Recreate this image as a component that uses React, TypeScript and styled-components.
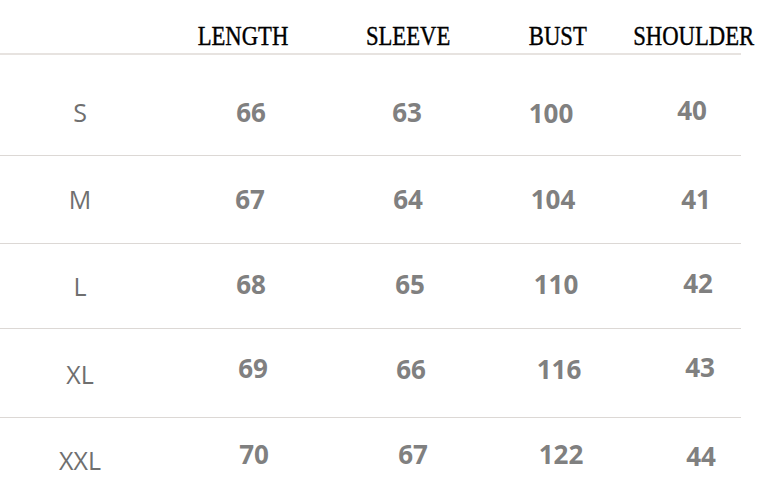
import React from "react";
import styled, { createGlobalStyle } from "styled-components";

const Global = createGlobalStyle`
  html, body { margin: 0; padding: 0; background: #ffffff; }
  body { width: 761px; height: 495px; overflow: hidden; }
`;

const Page = styled.div`
  width: 761px;
  height: 495px;
  background: #ffffff;
  overflow: hidden;
`;

const HeaderRow = styled.div`
  width: 741px;
  height: 50px;
  padding-bottom: 3px;
  border-bottom: 2px solid #e7e3e0;
  display: grid;
  grid-template-columns: 160px 166px 164px 136px 136px;
  align-items: end;
`;

const HeadCell = styled.div`
  display: flex;
  justify-content: center;
`;

const HeadText = styled.span`
  display: inline-block;
  font-family: "Liberation Serif", "Times New Roman", serif;
  font-size: 28px;
  line-height: 1;
  color: #000000;
  white-space: nowrap;
  transform: scaleX(0.81);
  -webkit-text-stroke: 0.4px #000;
`;

const Row = styled.div<{ $h: number; $last?: boolean }>`
  width: 741px;
  height: ${(p) => p.$h}px;
  border-bottom: ${(p) => (p.$last ? "none" : "1px solid #dcd8d5")};
  display: grid;
  grid-template-columns: 160px 182px 132px 158px 124px;
  align-items: center;
`;

const SizeCell = styled.div<{ $dy: number }>`
  text-align: center;
  font-family: "Open Sans", "Noto Sans", sans-serif;
  font-size: 25px;
  font-weight: 400;
  line-height: 1;
  color: #6f6f6f;
  transform: translateY(${(p) => p.$dy}px);
`;

const NumCell = styled.div<{ $dx: number; $dy: number }>`
  text-align: center;
  font-family: "Open Sans", "Noto Sans", sans-serif;
  font-size: 26px;
  font-weight: 700;
  line-height: 1;
  color: #808080;
  transform: translate(${(p) => p.$dx}px, ${(p) => p.$dy}px);
`;

type RowData = {
  size: string;
  h: number;
  labelDy: number;
  values: { v: string; dx: number; dy: number }[];
};

const rows: RowData[] = [
  {
    size: "S",
    h: 100,
    labelDy: 7,
    values: [
      { v: "66", dx: 0, dy: 7 },
      { v: "63", dx: -1, dy: 7 },
      { v: "100", dx: -2, dy: 8 },
      { v: "40", dx: -2, dy: 5 },
    ],
  },
  {
    size: "M",
    h: 87,
    labelDy: 0,
    values: [
      { v: "67", dx: -1, dy: -1 },
      { v: "64", dx: 0, dy: -1 },
      { v: "104", dx: 0, dy: -1 },
      { v: "41", dx: 2, dy: -1 },
    ],
  },
  {
    size: "L",
    h: 84,
    labelDy: 0,
    values: [
      { v: "68", dx: 0, dy: -2 },
      { v: "65", dx: 2, dy: -2 },
      { v: "110", dx: 3, dy: -2 },
      { v: "42", dx: 4, dy: -3 },
    ],
  },
  {
    size: "XL",
    h: 88,
    labelDy: 1,
    values: [
      { v: "69", dx: 2, dy: -5 },
      { v: "66", dx: 3, dy: -4 },
      { v: "116", dx: 6, dy: -4 },
      { v: "43", dx: 6, dy: -6 },
    ],
  },
  {
    size: "XXL",
    h: 77,
    labelDy: 4,
    values: [
      { v: "70", dx: 3, dy: -3 },
      { v: "67", dx: 5, dy: -3 },
      { v: "122", dx: 8, dy: -3 },
      { v: "44", dx: 7, dy: -1 },
    ],
  },
];

const headers = ["LENGTH", "SLEEVE", "BUST", "SHOULDER"];

export default function App() {
  return (
    <Page>
      <Global />
      <HeaderRow>
        <div />
        {headers.map((h) => (
          <HeadCell key={h}>
            <HeadText>{h}</HeadText>
          </HeadCell>
        ))}
      </HeaderRow>
      {rows.map((r, i) => (
        <Row key={r.size} $h={r.h} $last={i === rows.length - 1}>
          <SizeCell $dy={r.labelDy}>{r.size}</SizeCell>
          {r.values.map((c, j) => (
            <NumCell key={j} $dx={c.dx} $dy={c.dy}>
              {c.v}
            </NumCell>
          ))}
        </Row>
      ))}
    </Page>
  );
}
